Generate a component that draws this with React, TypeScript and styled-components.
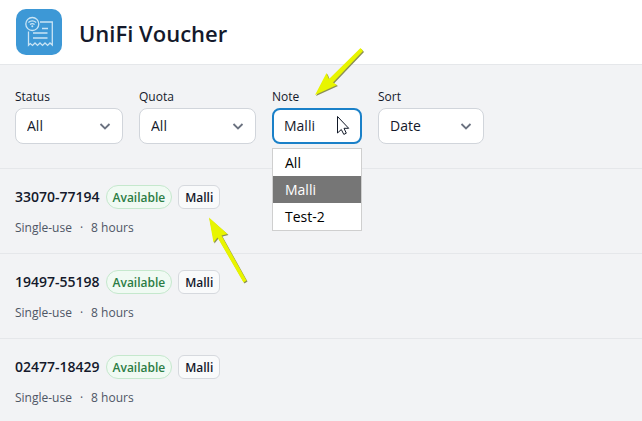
import React from "react";
import styled, { createGlobalStyle, css } from "styled-components";

const GlobalStyle = createGlobalStyle`
  *, *::before, *::after { box-sizing: border-box; }
  body {
    margin: 0;
    background: #f2f3f5;
    color: #14192b;
    font-family: "Segoe UI", "Open Sans", "Noto Sans", sans-serif;
    font-size: 14px;
    line-height: 20px;
    overflow-x: hidden;
  }
`;

const Header = styled.header`
  display: flex;
  align-items: center;
  gap: 16px;
  padding: 8px 15px;
  background: #fff;
  border-bottom: 1px solid #e5e7ea;
`;

const Logo = styled.svg`
  display: block;
  width: 48px;
  height: 48px;
`;

const Title = styled.h1`
  margin: 0;
  padding-top: 2px;
  font-size: 22px;
  line-height: 32px;
  font-weight: 600;
`;

const Filters = styled.form`
  display: flex;
  gap: 16px;
  padding: 24px 15px;
  border-bottom: 1px solid #e5e7ea;
`;

const Field = styled.div<{ $width: number }>`
  position: relative;
  flex: 0 0 auto;
  width: ${(p) => p.$width}px;
`;

const Label = styled.label`
  display: block;
  padding-bottom: 3px;
  font-size: 12px;
  line-height: 16px;
`;

const SelectBox = styled.div`
  display: flex;
  position: relative;
`;

const Select = styled.select<{ $open: boolean }>`
  appearance: none;
  width: 100%;
  height: 36px;
  padding: 0 11px;
  border: 1px solid #d1d5db;
  border-radius: 8px;
  outline: none;
  background: #fff;
  color: inherit;
  font: inherit;
  ${(p) =>
    p.$open &&
    css`
      border: 2px solid #1a80c8;
      padding: 0 10px;
    `}
`;

const Chevron = styled.svg`
  position: absolute;
  right: 10px;
  top: 10px;
  width: 16px;
  height: 16px;
  pointer-events: none;
`;

const Menu = styled.ul`
  position: absolute;
  z-index: 1;
  top: calc(100% + 4px);
  left: 0;
  right: 0;
  margin: 0;
  padding: 0;
  list-style: none;
  background: #fff;
  border: 1px solid #cfcfcf;
  color: #000;
`;

const Option = styled.li<{ $selected: boolean }>`
  padding: 0 12px;
  line-height: 27px;
  background: ${(p) => (p.$selected ? "#767676" : "transparent")};
  color: ${(p) => (p.$selected ? "#fff" : "inherit")};
`;

const Pointer = styled.svg`
  position: absolute;
  z-index: 2;
  top: 7px;
  right: 11px;
  width: 15px;
  height: 22px;
  pointer-events: none;
`;

const NoteArrow = styled.svg`
  position: absolute;
  top: -43px;
  left: 40px;
  width: 56px;
  height: 56px;
  pointer-events: none;
`;

const VoucherArrow = styled.svg`
  position: absolute;
  z-index: 1;
  top: 45px;
  left: 205px;
  width: 48px;
  height: 74px;
  pointer-events: none;
`;

const List = styled.ul`
  margin: 0;
  padding: 0;
  list-style: none;
`;

const Voucher = styled.li`
  position: relative;
  padding: 16px 15px;
  border-bottom: 1px solid #e5e7ea;

  &:last-child {
    border-bottom: 0;
  }
`;

const VoucherHead = styled.div`
  display: flex;
  align-items: center;
  gap: 6px;
`;

const Code = styled.strong`
  font-weight: 600;
`;

const Tag = styled.span<{ $kind: "status" | "note" }>`
  height: 24px;
  padding: 0 6px;
  border: 1px solid #d6d9de;
  border-radius: 6px;
  background: #f9fafb;
  font-size: 12px;
  line-height: 24px;
  font-weight: 600;
  ${(p) =>
    p.$kind === "status" &&
    css`
      border-color: #c5e8cd;
      border-radius: 12px;
      background: #f0faf3;
      color: #2c7d45;
    `}
`;

const Details = styled.div`
  display: flex;
  gap: 8px;
  padding-top: 10px;
  color: #4e5665;
  font-size: 12px;
  line-height: 18px;
`;

const filters = [
  { id: "status", label: "Status", value: "All", options: ["All"], width: 108 },
  { id: "quota", label: "Quota", value: "All", options: ["All"], width: 117 },
  { id: "note", label: "Note", value: "Malli", options: ["All", "Malli", "Test-2"], width: 90, open: true },
  { id: "sort", label: "Sort", value: "Date", options: ["Date"], width: 106 },
];

const vouchers = ["33070-77194", "19497-55198", "02477-18429"];

function AppLogo() {
  return (
    <Logo viewBox="0 0 48 48" fill="none" role="img" aria-label="UniFi Voucher logo">
      <rect x="1" y="1" width="46" height="46" rx="10" fill="#3d98d6" />
      <g stroke="#c9e4f5" strokeWidth="1.3">
        <circle cx="17.3" cy="16" r="6.5" />
        <path d="M25 14H37.3V37L35 35L32.6 37.4L30 35L27.5 37.4L25 35L22.5 37.4L20 35L17.5 37.4L15.3 35.6L13.5 37.3V23.5" />
        <path d="M27 20.5H33M18 25H32.5M18 30H32.5" strokeWidth="1.5" />
        <path d="M13.4 14.4Q17.3 11.2 21.2 14.4M15 16.5Q17.3 14.6 19.6 16.5" />
      </g>
      <circle cx="17.3" cy="18.2" r="1" fill="#c9e4f5" />
    </Logo>
  );
}

export default function App() {
  return (
    <>
      <GlobalStyle />
      <Header>
        <AppLogo />
        <Title>UniFi Voucher</Title>
      </Header>
      <main>
        <Filters>
          {filters.map((f) => (
            <Field key={f.id} $width={f.width}>
              <Label htmlFor={f.id}>{f.label}</Label>
              <SelectBox>
                <Select id={f.id} defaultValue={f.value} $open={!!f.open}>
                  {f.options.map((o) => (
                    <option key={o}>{o}</option>
                  ))}
                </Select>
                {!f.open && (
                  <Chevron viewBox="0 0 16 16" fill="none" aria-hidden="true">
                    <path d="M3.5 6L8 10.5L12.5 6" stroke="#6b7280" strokeWidth="1.8" />
                  </Chevron>
                )}
                {f.open && (
                  <>
                    <Menu role="listbox" aria-label={f.label}>
                      {f.options.map((o) => (
                        <Option key={o} role="option" aria-selected={o === f.value} $selected={o === f.value}>
                          {o}
                        </Option>
                      ))}
                    </Menu>
                    <Pointer viewBox="0 0 15 22" aria-hidden="true">
                      <path
                        d="M1.5 1.5V18L5.3 14.5L7.8 19.4L10.3 18.2L8 13.3H12.7Z"
                        fill="#fff"
                        stroke="#111827"
                        strokeWidth="1"
                      />
                    </Pointer>
                  </>
                )}
              </SelectBox>
              {f.open && (
                <NoteArrow viewBox="0 0 56 56" aria-hidden="true">
                  <path d="M4 50L15.5 28L18 34L49.5 3L52 6L22 37.5L26 40Z" fill="#8b8f55" />
                  <path d="M3 49L14.5 27L17 33L48.5 2L51 5L21 36.5L25 39Z" fill="#e8f500" />
                </NoteArrow>
              )}
            </Field>
          ))}
        </Filters>
        <List>
          {vouchers.map((code, i) => (
            <Voucher key={code}>
              <VoucherHead>
                <Code>{code}</Code>
                <Tag $kind="status">Available</Tag>
                <Tag $kind="note">Malli</Tag>
              </VoucherHead>
              <Details>
                <span>Single-use</span>
                <span>·</span>
                <span>8 hours</span>
              </Details>
              {i === 0 && (
                <VoucherArrow viewBox="0 0 48 74" aria-hidden="true">
                  <path d="M4.5 4.5L23.5 21L17.5 22.5L42.5 67.5L39.5 69.5L13.5 24.5L9.5 29.5Z" fill="#8b8f55" />
                  <path d="M4 3.5L22.5 20L16.5 21.5L41.5 66.5L38.5 68.5L12.5 23.5L8.5 28.5Z" fill="#e8f500" />
                </VoucherArrow>
              )}
            </Voucher>
          ))}
        </List>
      </main>
    </>
  );
}
